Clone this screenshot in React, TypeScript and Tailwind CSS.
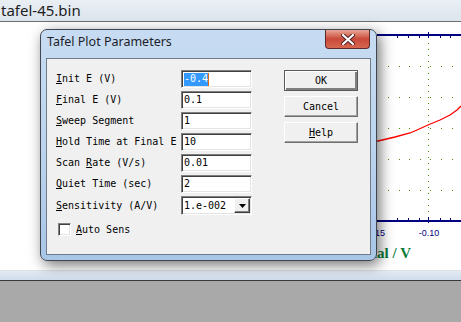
const mono = "font-['DejaVu_Sans_Mono','Liberation_Mono',monospace]";

function Field({ value, selected }: { value: string; selected?: boolean }) {
  return (
    <div className="h-[18px] w-[71px] bg-white border border-t-[#7f7f7f] border-l-[#7f7f7f] border-r-white border-b-white shadow-[inset_1px_1px_0_#404040,inset_-1px_-1px_0_#e3e3e3] flex items-center pl-[2px] text-[10px] text-black leading-none">
      {selected ? (
        <>
          <span className="bg-[#3399ff] text-white h-[13px] flex items-center">{value}</span>
          <span className="w-[1px] h-[13px] bg-[#e06a10]" />
        </>
      ) : (
        <span>{value}</span>
      )}
    </div>
  );
}

function Btn({ children, def }: { children: React.ReactNode; def?: boolean }) {
  return (
    <div
      className={
        "h-[21px] w-[74px] bg-[#f0f0f0] flex items-center justify-center text-[10px] text-black " +
        (def
          ? "border border-[#5a5a5a] shadow-[inset_1px_1px_0_#ffffff,inset_-2px_-2px_0_#808080]"
          : "border border-t-white border-l-white border-r-[#6e6e6e] border-b-[#6e6e6e] shadow-[inset_-1px_-1px_0_#a0a0a0]")
      }
    >
      {children}
    </div>
  );
}

const rows: [React.ReactNode, string][] = [
  [<><u>I</u>nit E (V)</>, "-0.4"],
  [<><u>F</u>inal E (V)</>, "0.1"],
  [<><u>S</u>weep Segment</>, "1"],
  [<><u>H</u>old Time at Final E</>, "10"],
  [<>Scan <u>R</u>ate (V/s)</>, "0.01"],
  [<><u>Q</u>uiet Time (sec)</>, "2"],
];

function Chart() {
  const hDots: JSX.Element[] = [];
  [44, 75, 106, 137, 168].forEach((y) => {
    for (let x = 388; x < 461; x += 10.6) {
      hDots.push(<rect key={`h${y}-${x}`} x={Math.round(x)} y={y} width={1} height={1} fill="#4c8a00" />);
    }
  });
  const vDots: JSX.Element[] = [];
  for (let y = 21; y < 195; y += 6) {
    vDots.push(<rect key={`v${y}`} x={428} y={y} width={1} height={1} fill="#4c8a00" />);
  }
  const ticks: JSX.Element[] = [];
  [397, 408, 419, 440, 450].forEach((x) => {
    ticks.push(<rect key={`t${x}`} x={x} y={14} width={1} height={2} fill="#000080" />);
    ticks.push(<rect key={`b${x}`} x={x} y={196} width={1} height={2} fill="#000080" />);
  });
  return (
    <svg className="absolute inset-0" width={461} height={248} viewBox="0 0 461 248">
      <rect x={377} y={12} width={84} height={2} fill="#000080" />
      <rect x={428} y={10} width={1} height={6} fill="#000080" />
      <rect x={377} y={198} width={84} height={2} fill="#000080" />
      <rect x={428} y={195} width={1} height={6} fill="#000080" />
      {ticks}
      {hDots}
      {vDots}
      <polyline
        points="370,121 378,119 395,115 410,111 417,108 428,103 440,98 450,93 457,88 461,84"
        fill="none"
        stroke="#ff0000"
        strokeWidth={1.3}
      />
      <text x={385} y={214} fontSize={9} fill="#000080" textAnchor="end" fontFamily="Liberation Sans, sans-serif">-0.15</text>
      <text x={429} y={214} fontSize={9} fill="#000080" textAnchor="middle" fontFamily="Liberation Sans, sans-serif">-0.10</text>
      <text x={411} y={236} fontSize={15} fontWeight="bold" fill="#0a7a3a" textAnchor="end" fontFamily="Liberation Serif, serif">Potential / V</text>
    </svg>
  );
}

export default function App() {
  return (
    <div className="w-[461px] h-[322px] overflow-hidden flex flex-col bg-white">
      <div className="h-[22px] shrink-0 bg-gradient-to-b from-[#eaeff5] to-[#dce4ed] border-b border-[#6e6e6e] flex items-center pl-[1px] text-[15px] text-[#1e1e1e] font-['Noto_Sans',sans-serif] leading-none">
        tafel-45.bin
      </div>
      <div className="relative h-[248px] shrink-0 bg-white">
        <Chart />
        <div className="absolute left-[40px] top-[7px] w-[337px] h-[232px] rounded-[7px] border border-[#3f4650] bg-gradient-to-b from-[#c7dcf2] via-[#bcd4ee] to-[#a9c6e7] shadow-[3px_4px_14px_rgba(0,0,0,0.55)] flex flex-col px-[5px] pb-[5px]">
          <div className="h-[28px] shrink-0 flex items-start justify-between">
            <span className="pl-[1px] pt-[6px] text-[12.5px] text-[#1e1e2a] font-['Noto_Sans',sans-serif] leading-none">
              Tafel Plot Parameters
            </span>
            <div className="mr-[1px] w-[45px] h-[19px] rounded-b-[4px] border border-t-0 border-[#5b2a2a] bg-gradient-to-b from-[#e8a595] via-[#c9493a] to-[#d7664e] flex items-center justify-center">
              <svg width="14" height="11" viewBox="0 0 14 11">
                <path d="M2 1 L12 10 M12 1 L2 10" stroke="#4a1f1f" strokeWidth="4" strokeLinecap="round" />
                <path d="M2 1 L12 10 M12 1 L2 10" stroke="#ffffff" strokeWidth="2.2" strokeLinecap="round" />
              </svg>
            </div>
          </div>
          <div className={"flex-1 border border-[#6f7c8c] bg-[#f0f0f0] pl-[9px] pt-[11px] flex text-[10px] text-black " + mono}>
            <div className="flex flex-col w-[196px]">
              <div className="grid grid-cols-[125px_71px] gap-y-[3px] items-center">
                {rows.map(([label, value], i) => (
                  <div key={i} className="contents">
                    <div className="whitespace-nowrap leading-none">{label}</div>
                    <Field value={value} selected={i === 0} />
                  </div>
                ))}
                <div className="whitespace-nowrap leading-none">
                  <u>S</u>ensitivity (A/V)
                </div>
                <div className="h-[19px] w-[71px] bg-white border border-t-[#7f7f7f] border-l-[#7f7f7f] border-r-white border-b-white shadow-[inset_1px_1px_0_#404040,inset_-1px_-1px_0_#e3e3e3] flex items-center justify-between pl-[2px] pr-[1px] leading-none">
                  <span>1.e-002</span>
                  <div className="w-[16px] h-[15px] bg-[#f0f0f0] border border-t-white border-l-white border-r-[#404040] border-b-[#404040] shadow-[inset_-1px_-1px_0_#808080] flex items-center justify-center">
                    <svg width="7" height="4" viewBox="0 0 7 4">
                      <path d="M0 0 H7 L3.5 4 Z" fill="#000" />
                    </svg>
                  </div>
                </div>
              </div>
              <div className="mt-[8px] ml-[2px] flex items-center gap-[5px] leading-none">
                <div className="w-[13px] h-[13px] bg-white border border-t-[#808080] border-l-[#808080] border-r-white border-b-white shadow-[inset_1px_1px_0_#404040,inset_-1px_-1px_0_#e3e3e3]" />
                <span>
                  <u>A</u>uto Sens
                </span>
              </div>
            </div>
            <div className="ml-[32px] flex flex-col gap-[5px]">
              <Btn def>OK</Btn>
              <Btn>Cancel</Btn>
              <Btn>
                <u>H</u>elp
              </Btn>
            </div>
          </div>
        </div>
      </div>
      <div className="h-[11px] shrink-0 border-t border-[#e0e0e0] bg-gradient-to-b from-[#e3ebf4] to-[#cfdcec] border-b border-b-[#3a3a3a]" />
      <div className="flex-1 bg-[#a9a9a9]" />
    </div>
  );
}
